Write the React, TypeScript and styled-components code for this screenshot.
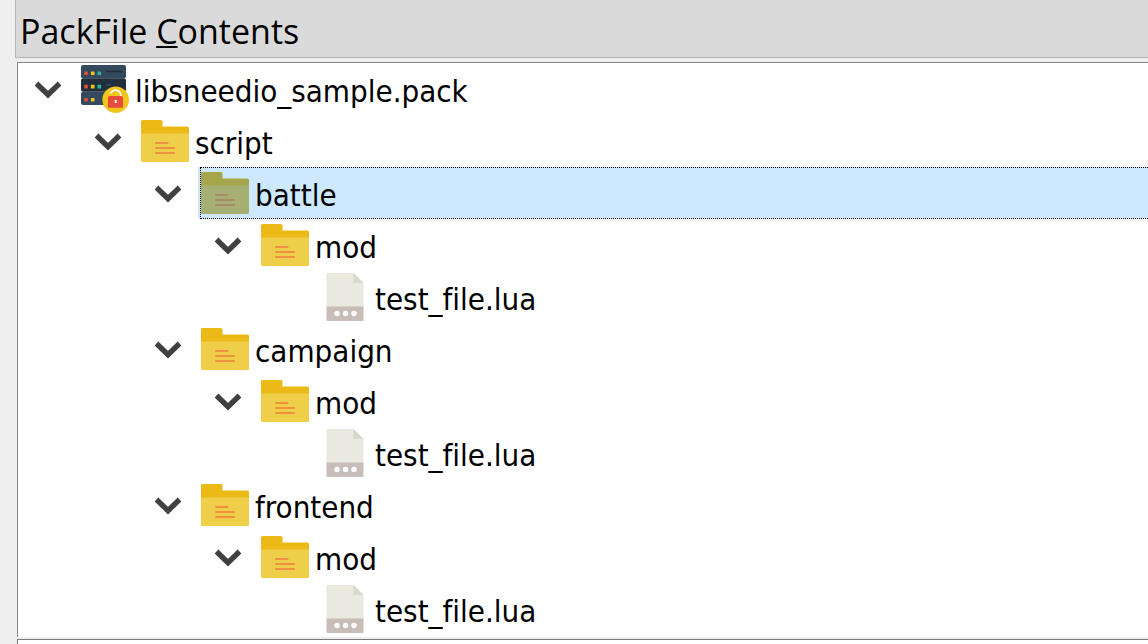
import React, { useState } from "react";
import styled, { createGlobalStyle } from "styled-components";

const GlobalStyle = createGlobalStyle`
  *, *::before, *::after { box-sizing: border-box; }
  html, body, #root { height: 100%; }
  body { margin: 0; background: #efefef; color: #000; overflow: hidden; }
`;

const Dock = styled.main`
  display: flex;
  flex-direction: column;
  min-height: 100%;
  padding-left: 15px;
`;

const DockTitle = styled.h1`
  margin: 0 0 4px;
  height: 58px;
  padding: 0 4px;
  border: solid #b4b4b4;
  border-width: 0 0 1px 1px;
  background: #dadada;
  font: 400 34px/62px "Open Sans", "Noto Sans", sans-serif;
  white-space: nowrap;
`;

const Mnemonic = styled.span`
  text-decoration: underline;
  text-decoration-thickness: 2px;
  text-underline-offset: 2px;
  text-decoration-skip-ink: none;
`;

const TreePanel = styled.section`
  margin: 0 0 2px 2px;
  padding-bottom: 2px;
  border: solid #828790;
  border-width: 1px 0 0 1px;
  background: #fff;
`;

const NextPanel = styled.section`
  flex: 1;
  min-height: 5px;
  margin-left: 2px;
  border: solid #7a7a7a;
  border-width: 1px 0 0 1px;
  background: #fff;
`;

const Branch = styled.ul<{ $root?: boolean }>`
  list-style: none;
  margin: 0;
  padding: 0 0 0 ${(p) => (p.$root ? 0 : 60)}px;
`;

const Row = styled.div`
  display: flex;
  height: 52px;
`;

const Toggle = styled.button<{ $open: boolean }>`
  flex: none;
  display: grid;
  place-items: center;
  width: 60px;
  padding: 2px 0 0;
  border: 0;
  background: none;
  svg { transform: ${(p) => (p.$open ? "none" : "rotate(-90deg)")}; }
`;

const Spacer = styled.span`
  flex: none;
  width: 60px;
`;

const Entry = styled.button<{ $selected: boolean }>`
  flex: 1;
  display: flex;
  padding: 0 0 0 2px;
  border: 0;
  outline: 0;
  background: ${(p) => (p.$selected ? "#cde8ff" : "transparent")};
  color: inherit;
  font: 400 31px/40px "DejaVu Sans Condensed", "DejaVu Sans", sans-serif;
  font-stretch: condensed;
  font-variant-ligatures: none;
  text-align: left;
  white-space: nowrap;
`;

const EntryFocus = styled.span<{ $selected: boolean }>`
  flex: 1;
  display: flex;
  align-items: center;
  gap: 6px;
  border: 1px dotted ${(p) => (p.$selected ? "#000" : "transparent")};
  border-right: 0;
`;

const EntryName = styled.span`
  padding-top: 4px;
`;

const Chevron = () => (
  <svg width="28" height="20" viewBox="0 0 28 20" aria-hidden="true">
    <path d="M2.500 3.500L14 14.700L25.500 3.500" fill="none" stroke="#404040" strokeWidth="5.400" />
  </svg>
);

const FolderIcon = ({ tinted }: { tinted: boolean }) => (
  <svg width="48" height="48" viewBox="0 0 48 48" aria-hidden="true">
    <path d="M0 17V4.500Q0 3 1.500 3H20Q21.500 3 21.500 4.500V9.500H46.500Q48 9.500 48 11V17Z" fill={tinted ? "#a5a64c" : "#ebba16"} />
    <path d="M0 16.500H48V43.500Q48 45 46.500 45H1.500Q0 45 0 43.500Z" fill={tinted ? "#a7b073" : "#efce4a"} />
    <path d="M15 26H26.500M15 31H33M15 36H33" stroke={tinted ? "#a88a6c" : "#ed9140"} strokeWidth="2" strokeLinecap="round" />
  </svg>
);

const FileIcon = () => (
  <svg width="48" height="48" viewBox="0 0 48 48" aria-hidden="true">
    <path d="M6.500 0H32.500L42.500 10V34H5.500V1Q5.500 0 6.500 0Z" fill="#e9e9e0" />
    <path d="M32.500 0V10H42.500Z" fill="#d9d7ca" />
    <path d="M5.500 33.500H42.500V47Q42.500 48 41.500 48H6.500Q5.500 48 5.500 47Z" fill="#c8bdb8" />
    <g fill="#fff">
      <circle cx="16" cy="40.500" r="2.700" />
      <circle cx="24.500" cy="40.500" r="2.700" />
      <circle cx="33" cy="40.500" r="2.700" />
    </g>
  </svg>
);

const PackIcon = () => (
  <svg width="48" height="48" viewBox="0 0 48 48" aria-hidden="true">
    <rect width="45" height="13.300" rx="2" fill="#35495e" />
    <rect y="13.300" width="45" height="13.400" rx="2" fill="#212f3c" />
    <rect y="26.700" width="45" height="13.300" rx="2" fill="#35495e" />
    <path d="M25 6.500H41" stroke="#212f3c" strokeWidth="1.600" />
    <path d="M25 19.800H30" stroke="#35495e" strokeWidth="1.600" />
    <g fill="#e64c3c">
      <rect x="3.200" y="6.500" width="3.600" height="3.600" rx="0.500" />
      <rect x="3.200" y="19.800" width="3.600" height="3.600" rx="0.500" />
      <rect x="3.200" y="33" width="3.600" height="3.600" rx="0.500" />
    </g>
    <g fill="#f3c51c">
      <rect x="9.900" y="6.500" width="3.600" height="3.600" rx="0.500" />
      <rect x="9.900" y="19.800" width="3.600" height="3.600" rx="0.500" />
      <rect x="9.900" y="33" width="3.600" height="3.600" rx="0.500" />
    </g>
    <g fill="#26b999">
      <rect x="16.500" y="6.500" width="3.600" height="3.600" rx="0.500" />
      <rect x="16.500" y="19.800" width="3.600" height="3.600" rx="0.500" />
    </g>
    <circle cx="34.700" cy="34.700" r="13.300" fill="#f3c51c" />
    <path d="M30 27.800A5.300 5.300 0 0 1 39.800 30V32" fill="none" stroke="#fff" strokeWidth="1.700" strokeLinecap="round" />
    <rect x="27" y="31" width="15" height="11.700" rx="1.500" fill="#e64c3c" />
    <path d="M34.700 35V38" stroke="#fff" strokeWidth="2" />
  </svg>
);

type Node = { name: string; kind: "pack" | "folder" | "file"; children?: Node[] };

const modFolder = (name: string): Node => ({
  name,
  kind: "folder",
  children: [{ name: "mod", kind: "folder", children: [{ name: "test_file.lua", kind: "file" }] }],
});

const pack: Node = {
  name: "libsneedio_sample.pack",
  kind: "pack",
  children: [
    { name: "script", kind: "folder", children: ["battle", "campaign", "frontend"].map(modFolder) },
  ],
};

type ItemProps = { node: Node; path: string; selected: string; onSelect: (path: string) => void };

const TreeItem = ({ node, path, selected, onSelect }: ItemProps) => {
  const [open, setOpen] = useState(true);
  const isSelected = selected === path;
  return (
    <li role="treeitem" aria-expanded={node.children ? open : undefined} aria-selected={isSelected}>
      <Row>
        {node.children ? (
          <Toggle $open={open} aria-label={`Toggle ${node.name}`} onClick={() => setOpen(!open)}>
            <Chevron />
          </Toggle>
        ) : (
          <Spacer />
        )}
        <Entry $selected={isSelected} onClick={() => onSelect(path)}>
          <EntryFocus $selected={isSelected}>
            {node.kind === "pack" && <PackIcon />}
            {node.kind === "folder" && <FolderIcon tinted={isSelected} />}
            {node.kind === "file" && <FileIcon />}
            <EntryName>{node.name}</EntryName>
          </EntryFocus>
        </Entry>
      </Row>
      {node.children && open && (
        <Branch role="group">
          {node.children.map((child) => (
            <TreeItem
              key={child.name}
              node={child}
              path={`${path}/${child.name}`}
              selected={selected}
              onSelect={onSelect}
            />
          ))}
        </Branch>
      )}
    </li>
  );
};

export default function App() {
  const [selected, setSelected] = useState(`${pack.name}/script/battle`);
  return (
    <>
      <GlobalStyle />
      <Dock>
        <DockTitle>
          PackFile <Mnemonic>C</Mnemonic>ontents
        </DockTitle>
        <TreePanel>
          <Branch $root role="tree" aria-label="PackFile Contents">
            <TreeItem node={pack} path={pack.name} selected={selected} onSelect={setSelected} />
          </Branch>
        </TreePanel>
        <NextPanel />
      </Dock>
    </>
  );
}
